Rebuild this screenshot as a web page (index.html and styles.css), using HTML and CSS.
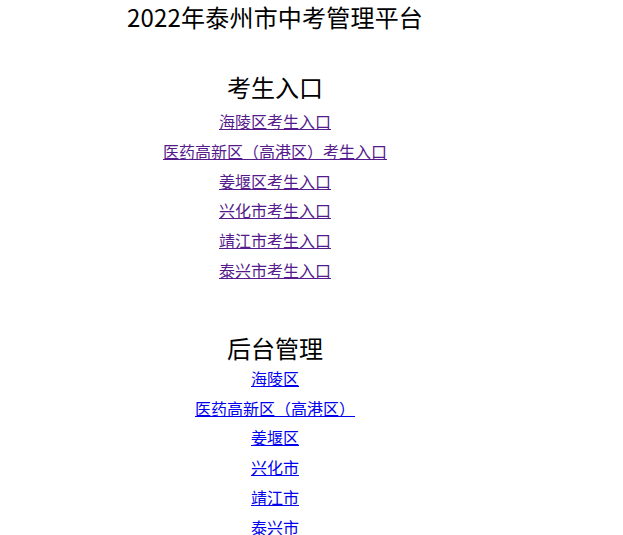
FILE: index.html
```html
<!DOCTYPE html>
<html lang="zh-CN">
<head>
<meta charset="utf-8">
<title>2022年泰州市中考管理平台</title>
<link rel="stylesheet" href="styles.css">
</head>
<body>
<div class="page">
  <h1 class="title">2022年泰州市中考管理平台</h1>

  <section class="group">
    <h2 class="group-title">考生入口</h2>
    <ul class="links">
      <li><a class="visited" href="#hl">海陵区考生入口</a></li>
      <li><a class="visited" href="#yy">医药高新区（高港区）考生入口</a></li>
      <li><a class="visited" href="#jy">姜堰区考生入口</a></li>
      <li><a class="visited" href="#xh">兴化市考生入口</a></li>
      <li><a class="visited" href="#jj">靖江市考生入口</a></li>
      <li><a class="visited" href="#tx">泰兴市考生入口</a></li>
    </ul>
  </section>

  <section class="group admin">
    <h2 class="group-title">后台管理</h2>
    <ul class="links">
      <li><a href="#a-hl">海陵区</a></li>
      <li><a href="#a-yy">医药高新区（高港区）</a></li>
      <li><a href="#a-jy">姜堰区</a></li>
      <li><a href="#a-xh">兴化市</a></li>
      <li><a href="#a-jj">靖江市</a></li>
      <li><a href="#a-tx">泰兴市</a></li>
    </ul>
  </section>
</div>
</body>
</html>
```

FILE: styles.css
```css
html, body {
  margin: 0;
  padding: 0;
  background: #ffffff;
}

body {
  font-family: "Noto Sans CJK SC", "Noto Sans", sans-serif;
  color: #000000;
}

.page {
  width: 550px;
  text-align: center;
}

.title {
  margin: 0;
  padding-top: 1px;
  font-size: 24px;
  font-weight: normal;
  line-height: 32px;
  letter-spacing: 0.2px;
}

.group {
  margin-top: 38px;
}

.group.admin {
  margin-top: 46px;
}

.group-title {
  margin: 0;
  font-size: 24px;
  font-weight: normal;
  line-height: 32px;
}

.links {
  list-style: none;
  margin: 4px 0 0;
  padding: 0;
  display: flex;
  flex-direction: column;
  align-items: center;
}

.admin .links {
  margin-top: 0;
}

.links li {
  font-size: 16px;
  line-height: 29.8px;
}

.links a {
  color: #0000ee;
  text-decoration: underline;
}

.links a.visited {
  color: #551a8b;
}
```
